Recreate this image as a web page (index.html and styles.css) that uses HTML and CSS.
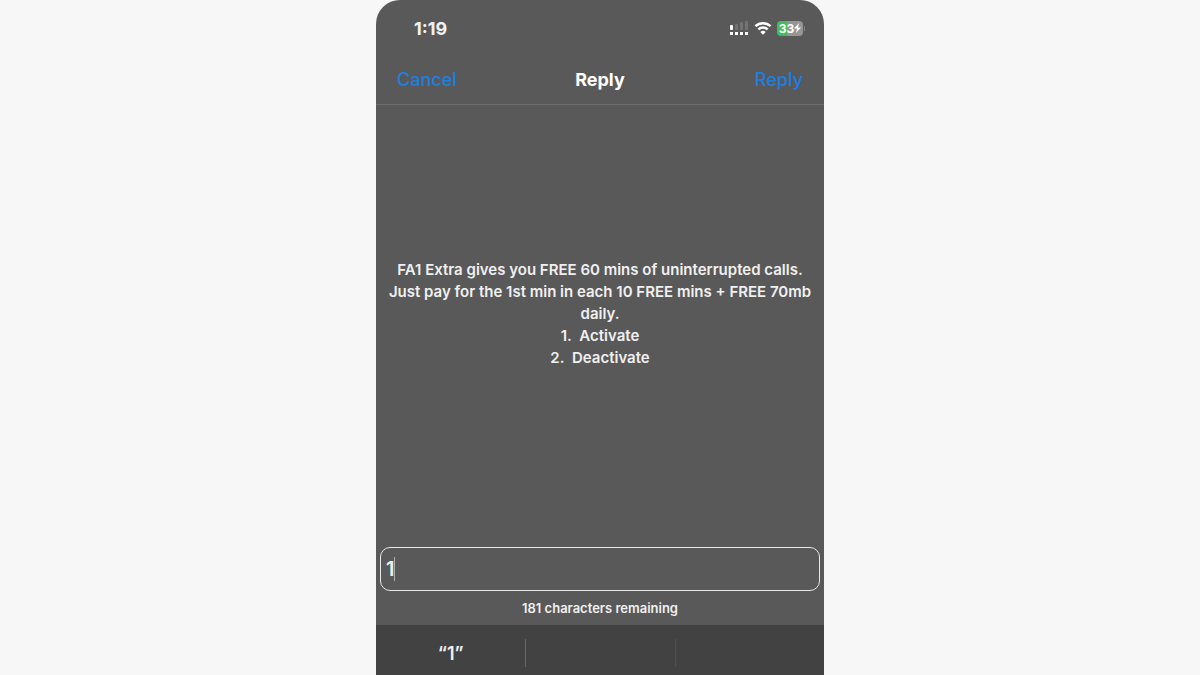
FILE: index.html
```html
<!DOCTYPE html>
<html lang="en">

<head>
    <meta charset="UTF-8">
    <meta name="viewport" content="width=device-width, initial-scale=1.0">
    <title>Reply</title>
    <link rel="stylesheet" href="styles.css">
</head>

<body>
    <div class="phone">
        <!-- Status bar -->
        <div class="status-bar">
            <time class="clock">1:19</time>
            <div class="status-icons">
                <svg class="signal" width="20" height="16" viewBox="0 0 20 16" aria-hidden="true">
                    <g fill="#fff">
                        <rect x="1" y="5" width="3" height="5" rx="1" />
                        <rect x="1" y="12" width="3" height="3" />
                        <rect x="6" y="12" width="3" height="3" />
                        <rect x="11" y="12" width="3" height="3" />
                        <rect x="16" y="12" width="3" height="3" />
                    </g>
                    <g fill="#737373">
                        <rect x="6" y="4" width="3" height="6" rx="1" />
                        <rect x="11" y="2" width="3" height="8" rx="1" />
                        <rect x="16" y="1" width="3" height="9" rx="1" />
                    </g>
                </svg>
                <svg class="wifi" width="18" height="14" viewBox="0 0 18 14" aria-hidden="true">
                    <path d="M1.4 5.2a11 11 0 0 1 15.2 0M4.3 8.4a6.8 6.8 0 0 1 9.4 0" fill="none" stroke="#fff" stroke-width="2.5" />
                    <path d="M6.3 10.9a4 4 0 0 1 5.4 0L9 13.8z" fill="#fff" />
                </svg>
                <div class="battery">
                    <span>33</span>
                    <svg width="7" height="10" viewBox="0 0 7 10" aria-hidden="true">
                        <path d="M5 0 0 5.6h3L2 10l5-5.6H4z" fill="#fff" />
                    </svg>
                </div>
            </div>
        </div>

        <form class="reply-form">
            <header class="nav-bar">
                <button type="button" class="nav-button">Cancel</button>
                <h1>Reply</h1>
                <button type="submit" class="nav-button nav-send">Reply</button>
            </header>

            <main class="message">
                <p>FA1 Extra gives you FREE 60 mins of uninterrupted calls. Just pay for the 1st min in each 10 FREE mins + FREE 70mb daily.</p>
                <ul>
                    <li>1.&nbsp; Activate</li>
                    <li>2.&nbsp; Deactivate</li>
                </ul>
            </main>

            <div class="field">
                <input type="text" id="answer" class="answer" value="1" aria-label="Your reply" aria-describedby="remaining">
                <span class="caret"></span>
            </div>
            <p class="remaining" id="remaining">181 characters remaining</p>
        </form>

        <!-- Keyboard suggestions -->
        <div class="suggestions">
            <button type="button" class="suggestion">“1”</button>
            <button type="button" class="suggestion" aria-label="Empty suggestion"></button>
            <button type="button" class="suggestion" aria-label="Empty suggestion"></button>
        </div>
    </div>
</body>

</html>
```
FILE: styles.css
```css
* {
    box-sizing: border-box;
}

body {
    margin: 0;
    background-color: #f7f7f7;
    font-family: Inter, "Liberation Sans", sans-serif;
    color: #f0f0f0;
}

h1,
p,
ul {
    margin: 0;
    padding: 0;
}

button,
input {
    font-family: inherit;
    color: inherit;
    background: none;
    border: none;
    border-radius: 0;
}

button {
    padding: 0;
    cursor: pointer;
}

.phone {
    display: flex;
    flex-direction: column;
    max-width: 448px;
    min-height: 100vh;
    margin: 0 auto;
    background-color: #595959;
    border-radius: 24px 24px 0 0;
    overflow: hidden;
}

/* Status bar */
.status-bar {
    display: flex;
    align-items: center;
    justify-content: space-between;
    height: 56px;
    padding: 0 21px 0 38px;
}

.clock {
    font-size: 18px;
    font-weight: 700;
}

.status-icons {
    display: flex;
    align-items: center;
    gap: 5px;
}

.battery {
    position: relative;
    display: flex;
    align-items: center;
    justify-content: center;
    width: 26px;
    height: 15px;
    border-radius: 4px;
    background: linear-gradient(to right, #3fbd60 38%, #969696 38%);
    color: #fff;
    font-size: 12px;
    font-weight: 700;
}

.battery::after {
    content: "";
    position: absolute;
    left: 100%;
    width: 1px;
    height: 5px;
    margin-left: 1px;
    background-color: #858585;
}

/* Form */
.reply-form {
    display: flex;
    flex: 1;
    flex-direction: column;
}

.nav-bar {
    display: grid;
    grid-template-columns: 1fr auto 1fr;
    align-items: center;
    height: 49px;
    padding: 0 21px 2px;
    border-bottom: 1px solid #6d6d6d;
}

.nav-bar h1 {
    color: #fff;
    font-size: 18px;
    font-weight: 700;
}

.nav-button {
    justify-self: start;
    color: #1d7fe0;
    font-size: 18px;
    font-weight: 500;
}

.nav-send {
    justify-self: end;
}

.message {
    display: flex;
    flex: 1;
    flex-direction: column;
    justify-content: center;
    padding: 0 8px 24px;
    font-size: 15px;
    font-weight: 600;
    line-height: 22px;
    text-align: center;
}

.message ul {
    list-style: none;
}

.field {
    position: relative;
    margin: 0 4px;
}

.answer {
    display: block;
    width: 100%;
    height: 44px;
    padding: 0 5px;
    border: 1px solid #e6e6e6;
    border-radius: 10px;
    font-size: 20px;
    font-weight: 600;
    outline: none;
}

.caret {
    position: absolute;
    top: 10px;
    left: 14px;
    width: 1px;
    height: 24px;
    background-color: #b0b0b0;
}

.remaining {
    padding: 8px 0;
    font-size: 13px;
    font-weight: 600;
    line-height: 18px;
    text-align: center;
}

/* Suggestions */
.suggestions {
    display: grid;
    grid-template-columns: repeat(3, 1fr);
    height: 50px;
    padding: 14px 0 8px;
    background-color: #424242;
}

.suggestion {
    font-size: 18px;
    font-weight: 600;
}

.suggestion + .suggestion {
    border-left: 1px solid #666;
}

.suggestion:last-child {
    border-left-color: #505050;
}
```
